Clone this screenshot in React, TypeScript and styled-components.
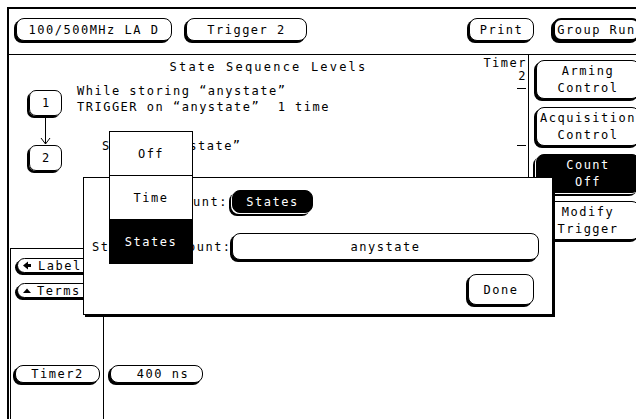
import React from "react";
import styled, { createGlobalStyle } from "styled-components";

const GlobalStyle = createGlobalStyle`
  html, body {
    margin: 0;
    padding: 0;
    background: #fff;
  }
  body {
    font-family: "DejaVu Sans Mono", "Liberation Mono", monospace;
    font-size: 12px;
    letter-spacing: 1.5px;
    color: #000;
  }
`;

const Screen = styled.div`
  width: 636px;
  height: 419px;
  box-sizing: border-box;
  padding: 7px 0 0 7px;
  overflow: hidden;
`;

const Frame = styled.div`
  position: relative;
  height: 100%;
  box-sizing: border-box;
  border-top: 2px solid #000;
  border-left: 2px solid #000;
  display: flex;
  flex-direction: column;
  overflow: hidden;
`;

const TopBar = styled.div`
  height: 46px;
  flex-shrink: 0;
  box-sizing: border-box;
  border-bottom: 1px solid #000;
  display: flex;
  align-items: flex-start;
  padding: 9px 0 0 7px;
`;

const Key = styled.div<{
  $w: number;
  $h: number;
  $ml?: number;
  $inverse?: boolean;
  $heavy?: boolean;
}>`
  box-sizing: border-box;
  flex-shrink: 0;
  width: ${(p) => p.$w}px;
  height: ${(p) => p.$h}px;
  margin-left: ${(p) => p.$ml ?? 0}px;
  border: ${(p) => (p.$heavy ? 2 : 1)}px solid #000;
  border-radius: 8px;
  background: ${(p) => (p.$inverse ? "#000" : "#fff")};
  color: ${(p) => (p.$inverse ? "#fff" : "#000")};
  box-shadow: ${(p) =>
    p.$inverse ? "-1px 1px 0 #fff, -3px 3px 0 #000" : "-2px 2px 0 #000"};
  display: flex;
  align-items: center;
  justify-content: center;
  white-space: nowrap;
`;

const UpperBody = styled.div`
  height: 192px;
  flex-shrink: 0;
  display: flex;
`;

const MainUpper = styled.div`
  width: 519px;
  flex-shrink: 0;
  display: grid;
  grid-template-columns: 1fr;
  grid-template-rows: auto 1fr;
`;

const Title = styled.div`
  grid-row: 1;
  grid-column: 1;
  justify-self: center;
  margin-top: 4px;
  line-height: 16px;
  letter-spacing: 2.2px;
`;

const TimerColumn = styled.div`
  grid-row: 1 / span 2;
  grid-column: 1;
  justify-self: end;
  display: flex;
  flex-direction: column;
  align-items: flex-end;
  padding: 2px 1px 0 0;
  line-height: 13px;
`;

const Dash = styled.div<{ $mt: number }>`
  width: 9px;
  height: 1px;
  background: #000;
  margin: ${(p) => p.$mt}px 1px 0 0;
`;

const Sequence = styled.div`
  grid-row: 2;
  grid-column: 1;
  padding: 9px 0 0 20px;
  display: flex;
  flex-direction: column;
`;

const LevelRow = styled.div`
  display: flex;
  align-items: flex-start;
`;

const Rail = styled.div`
  width: 33px;
  display: flex;
  flex-direction: column;
  align-items: center;
  padding-top: 6px;
`;

const LevelBox = styled.div`
  box-sizing: border-box;
  width: 33px;
  height: 26px;
  border: 1px solid #000;
  border-radius: 7px;
  box-shadow: -2px 2px 0 #000;
  display: flex;
  align-items: center;
  justify-content: center;
  letter-spacing: 0;
`;

const Arrow = styled.svg`
  display: block;
  margin-bottom: -6px;
`;

const LevelText = styled.div<{ $indent: number }>`
  margin-left: ${(p) => p.$indent}px;
  line-height: 15.5px;
  white-space: pre;
`;

const SoftColumn = styled.div`
  flex: 1;
  border-left: 1px solid #000;
  padding: 5px 0 0 7px;
  display: flex;
  flex-direction: column;
  gap: 8px;
`;

const SoftKey = styled(Key)`
  flex-direction: column;
  line-height: 17px;
`;

const LowerBody = styled.div`
  flex: 1;
  margin-top: 1px;
  display: flex;
  align-items: stretch;
`;

const LeftPanel = styled.div`
  width: 94px;
  margin-left: 1px;
  box-sizing: border-box;
  border: 1px solid #000;
  border-bottom: none;
  padding-top: 9px;
  display: flex;
  flex-direction: column;
  align-items: flex-start;
`;

const SmallKey = styled(Key)<{ $mt?: number }>`
  margin-top: ${(p) => p.$mt ?? 0}px;
  justify-content: flex-start;
  padding-left: 5px;
  gap: 6px;
`;

const LowerRight = styled.div`
  padding-top: 117px;
`;

const Popup = styled.div`
  position: absolute;
  left: 100px;
  top: 122px;
  width: 84px;
  height: 133px;
  box-sizing: border-box;
  border: 1px solid #000;
  background: #fff;
  display: flex;
  flex-direction: column;
  z-index: 2;
`;

const PopupItem = styled.div<{ $active?: boolean }>`
  flex: 1;
  display: flex;
  align-items: center;
  justify-content: center;
  background: ${(p) => (p.$active ? "#000" : "#fff")};
  color: ${(p) => (p.$active ? "#fff" : "#000")};
  & + & {
    border-top: 1px solid #000;
  }
`;

const Dialog = styled.div`
  position: absolute;
  left: 74px;
  top: 168px;
  width: 470px;
  height: 138px;
  box-sizing: border-box;
  border: 1px solid #000;
  box-shadow: 2px 2px 0 #000;
  background: #fff;
  padding: 12px 0 0 8px;
  z-index: 1;
`;

const FormRow = styled.div<{ $mt?: number }>`
  display: grid;
  grid-template-columns: 140px 307px;
  align-items: center;
  margin-top: ${(p) => p.$mt ?? 0}px;
`;

const FieldLabel = styled.div`
  text-align: right;
  white-space: nowrap;
  padding-right: 4px;
`;

const DoneRow = styled.div`
  display: flex;
  justify-content: flex-end;
  width: 442px;
  margin-top: 14px;
`;

const LeftArrowGlyph = () => (
  <svg width="9" height="9" viewBox="0 0 9 9">
    <polygon points="0,4.5 5,0.5 5,8.5" fill="#000" />
    <rect x="5" y="3" width="3" height="3" fill="#000" />
  </svg>
);

const UpArrowGlyph = () => (
  <svg width="8" height="8" viewBox="0 0 8 8">
    <polygon points="0,6 4,1.5 8,6" fill="#000" />
  </svg>
);

const App = () => {
  return (
    <Screen>
      <GlobalStyle />
      <Frame>
        <TopBar>
          <Key $w={156} $h={23}>100/500MHz LA D</Key>
          <Key $w={121} $h={23} $ml={14}>Trigger 2</Key>
          <Key $w={65} $h={23} $ml={162}>Print</Key>
          <Key $w={87} $h={23} $ml={19} $heavy>Group Run</Key>
        </TopBar>

        <UpperBody>
          <MainUpper>
            <Title>State Sequence Levels</Title>
            <TimerColumn>
              <div>Timer</div>
              <div>2</div>
              <Dash $mt={5} />
              <Dash $mt={56} />
            </TimerColumn>
            <Sequence>
              <LevelRow>
                <Rail>
                  <LevelBox>1</LevelBox>
                  <Arrow width="33" height="29" viewBox="0 0 33 29">
                    <line x1="16.5" y1="2" x2="16.5" y2="28" stroke="#000" strokeWidth="1" />
                    <polyline points="12,22 16.5,28 21,22" fill="none" stroke="#000" strokeWidth="1" />
                  </Arrow>
                </Rail>
                <LevelText $indent={15}>
                  {"While storing \u201Canystate\u201D\nTRIGGER on \u201Canystate\u201D  1 time"}
                </LevelText>
              </LevelRow>
              <LevelRow>
                <Rail>
                  <LevelBox>2</LevelBox>
                </Rail>
                <LevelText $indent={40}>{"Store \u201Canystate\u201D"}</LevelText>
              </LevelRow>
            </Sequence>
          </MainUpper>

          <SoftColumn>
            <SoftKey $w={104} $h={39}>
              <span>Arming</span>
              <span>Control</span>
            </SoftKey>
            <SoftKey $w={104} $h={39}>
              <span>Acquisition</span>
              <span>Control</span>
            </SoftKey>
            <SoftKey $w={104} $h={39} $inverse>
              <span>Count</span>
              <span>Off</span>
            </SoftKey>
            <SoftKey $w={104} $h={39}>
              <span>Modify</span>
              <span>Trigger</span>
            </SoftKey>
          </SoftColumn>
        </UpperBody>

        <LowerBody>
          <LeftPanel>
            <SmallKey $w={80} $h={15} $ml={6}>
              <LeftArrowGlyph />
              <span>Label</span>
            </SmallKey>
            <SmallKey $w={80} $h={15} $ml={6} $mt={10}>
              <UpArrowGlyph />
              <span>Terms</span>
            </SmallKey>
            <Key $w={85} $h={18} $ml={4} style={{ marginTop: 67 }}>
              Timer2
            </Key>
          </LeftPanel>
          <LowerRight>
            <Key $w={93} $h={18} $ml={6} style={{ paddingLeft: 13 }}>
              400 ns
            </Key>
          </LowerRight>
        </LowerBody>

        <Dialog>
          <FormRow>
            <FieldLabel>Count:</FieldLabel>
            <Key $w={81} $h={23} $inverse>States</Key>
          </FormRow>
          <FormRow $mt={20}>
            <FieldLabel>States to count:</FieldLabel>
            <Key $w={307} $h={27}>anystate</Key>
          </FormRow>
          <DoneRow>
            <Key $w={66} $h={31}>Done</Key>
          </DoneRow>
        </Dialog>

        <Popup>
          <PopupItem>Off</PopupItem>
          <PopupItem>Time</PopupItem>
          <PopupItem $active>States</PopupItem>
        </Popup>
      </Frame>
    </Screen>
  );
};

export default App;
